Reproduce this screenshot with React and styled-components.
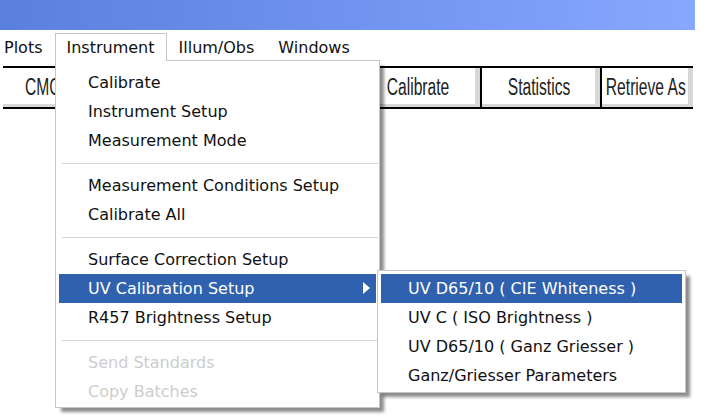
import React from "react";
import styled, { createGlobalStyle } from "styled-components";

const Global = createGlobalStyle`
  html, body { margin: 0; padding: 0; background: #fff; }
  body {
    width: 707px; height: 416px; overflow: hidden;
    font-family: "DejaVu Sans", Verdana, sans-serif;
  }
`;

const Screen = styled.div`
  position: relative;
  width: 707px;
  height: 416px;
  overflow: hidden;
  background: #fff;
`;

const TitleBar = styled.div`
  width: 695px;
  height: 30px;
  background: linear-gradient(to right, #5a80dd, #6f93ee 50%, #88a7ff);
`;

const MenuBar = styled.div`
  display: flex;
  align-items: flex-end;
  height: 30px;
  padding-left: 3px;
`;

const MenuTitle = styled.div`
  position: relative;
  z-index: 3;
  height: ${(p) => (p.$open ? "28px" : "27px")};
  margin-bottom: ${(p) => (p.$open ? "-1px" : "0")};
  box-sizing: border-box;
  padding: 1px 11px 0 ${(p) => (p.$first ? "0" : "11px")};
  line-height: 25px;
  font-size: 16px;
  color: #111;
  background: #fff;
  border: 1px solid ${(p) => (p.$open ? "#c6c6c6" : "transparent")};
  border-bottom: none;
  white-space: nowrap;
`;

const Toolbar = styled.div`
  display: flex;
  width: 690px;
  height: 43px;
  margin: 6px 0 0 3px;
  box-sizing: border-box;
  overflow: hidden;
  border-top: 2px solid #000;
  border-bottom: 2px solid #000;
  font-family: "Liberation Sans", Arial, sans-serif;
`;

const ToolButton = styled.div`
  flex: 0 0 ${(p) => p.$w}px;
  box-sizing: border-box;
  display: flex;
  align-items: center;
  justify-content: ${(p) => (p.$left ? "flex-start" : "center")};
  padding: 0 4px 0 ${(p) => (p.$left ? "22px" : "0")};
  border-left: ${(p) => (p.$first ? "none" : "2px solid #000")};
  background: #fff;
  box-shadow: inset -5px -3px 0 #d8d8d8;
  overflow: hidden;
  white-space: nowrap;
`;

const ToolLabel = styled.span`
  display: inline-block;
  font-size: 23px;
  line-height: 1;
  color: #222;
  transform: scaleX(0.68);
  transform-origin: ${(p) => (p.$left ? "left center" : "center")};
`;

const Menu = styled.div`
  position: absolute;
  z-index: 2;
  left: ${(p) => p.$x}px;
  top: ${(p) => p.$y}px;
  width: ${(p) => p.$w}px;
  box-sizing: border-box;
  padding: ${(p) => p.$pad};
  background: #fff;
  border: 1px solid #c6c6c6;
  box-shadow: 5px 5px 3px -1px rgba(0, 0, 0, 0.45);
  font-size: 16px;
`;

const Item = styled.div`
  position: relative;
  height: 29px;
  line-height: 29px;
  margin: 0 3px;
  padding-left: ${(p) => p.$indent}px;
  white-space: nowrap;
  color: ${(p) => (p.$disabled ? "#cdcdcd" : p.$active ? "#fff" : "#111")};
  background: ${(p) => (p.$active ? "#2f61ae" : "transparent")};
`;

const Separator = styled.div`
  height: 16px;
  display: flex;
  align-items: center;
  margin: 0 1px 0 6px;
  &::after {
    content: "";
    flex: 1;
    height: 1px;
    background: #d6d6d6;
  }
`;

const Arrow = styled.svg`
  position: absolute;
  right: 6px;
  top: 8px;
`;

const mainItems = [
  { t: "Calibrate" },
  { t: "Instrument Setup" },
  { t: "Measurement Mode" },
  { sep: true },
  { t: "Measurement Conditions Setup" },
  { t: "Calibrate All" },
  { sep: true },
  { t: "Surface Correction Setup" },
  { t: "UV Calibration Setup", active: true, sub: true },
  { t: "R457 Brightness Setup" },
  { sep: true },
  { t: "Send Standards", disabled: true },
  { t: "Copy Batches", disabled: true },
];

const subItems = [
  { t: "UV D65/10 ( CIE Whiteness )", active: true },
  { t: "UV C ( ISO Brightness )" },
  { t: "UV D65/10 ( Ganz Griesser )" },
  { t: "Ganz/Griesser Parameters" },
];

const tools = [
  { t: "CMC", w: 355, first: true, left: true },
  { t: "Calibrate", w: 122 },
  { t: "Statistics", w: 120 },
  { t: "Retrieve As", w: 93 },
];

export default function App() {
  return (
    <Screen>
      <Global />
      <TitleBar />
      <MenuBar>
        <MenuTitle $first>Plots</MenuTitle>
        <MenuTitle $open>Instrument</MenuTitle>
        <MenuTitle>Illum/Obs</MenuTitle>
        <MenuTitle>Windows</MenuTitle>
      </MenuBar>
      <Toolbar>
        {tools.map((b) => (
          <ToolButton key={b.t} $w={b.w} $first={b.first} $left={b.left}>
            <ToolLabel $left={b.left}>{b.t}</ToolLabel>
          </ToolButton>
        ))}
      </Toolbar>

      <Menu $x={55} $y={60} $w={325} $pad="7px 0 1px">
        {mainItems.map((it, i) =>
          it.sep ? (
            <Separator key={i} />
          ) : (
            <Item key={i} $indent={29} $active={it.active} $disabled={it.disabled}>
              {it.t}
              {it.sub && (
                <Arrow width="7" height="12" viewBox="0 0 7 12">
                  <polygon points="0,0 7,6 0,12" fill="#fff" />
                </Arrow>
              )}
            </Item>
          )
        )}
      </Menu>

      <Menu $x={377} $y={270} $w={309} $pad="3px 0 2px">
        {subItems.map((it, i) => (
          <Item key={i} $indent={27} $active={it.active}>
            {it.t}
          </Item>
        ))}
      </Menu>
    </Screen>
  );
}
